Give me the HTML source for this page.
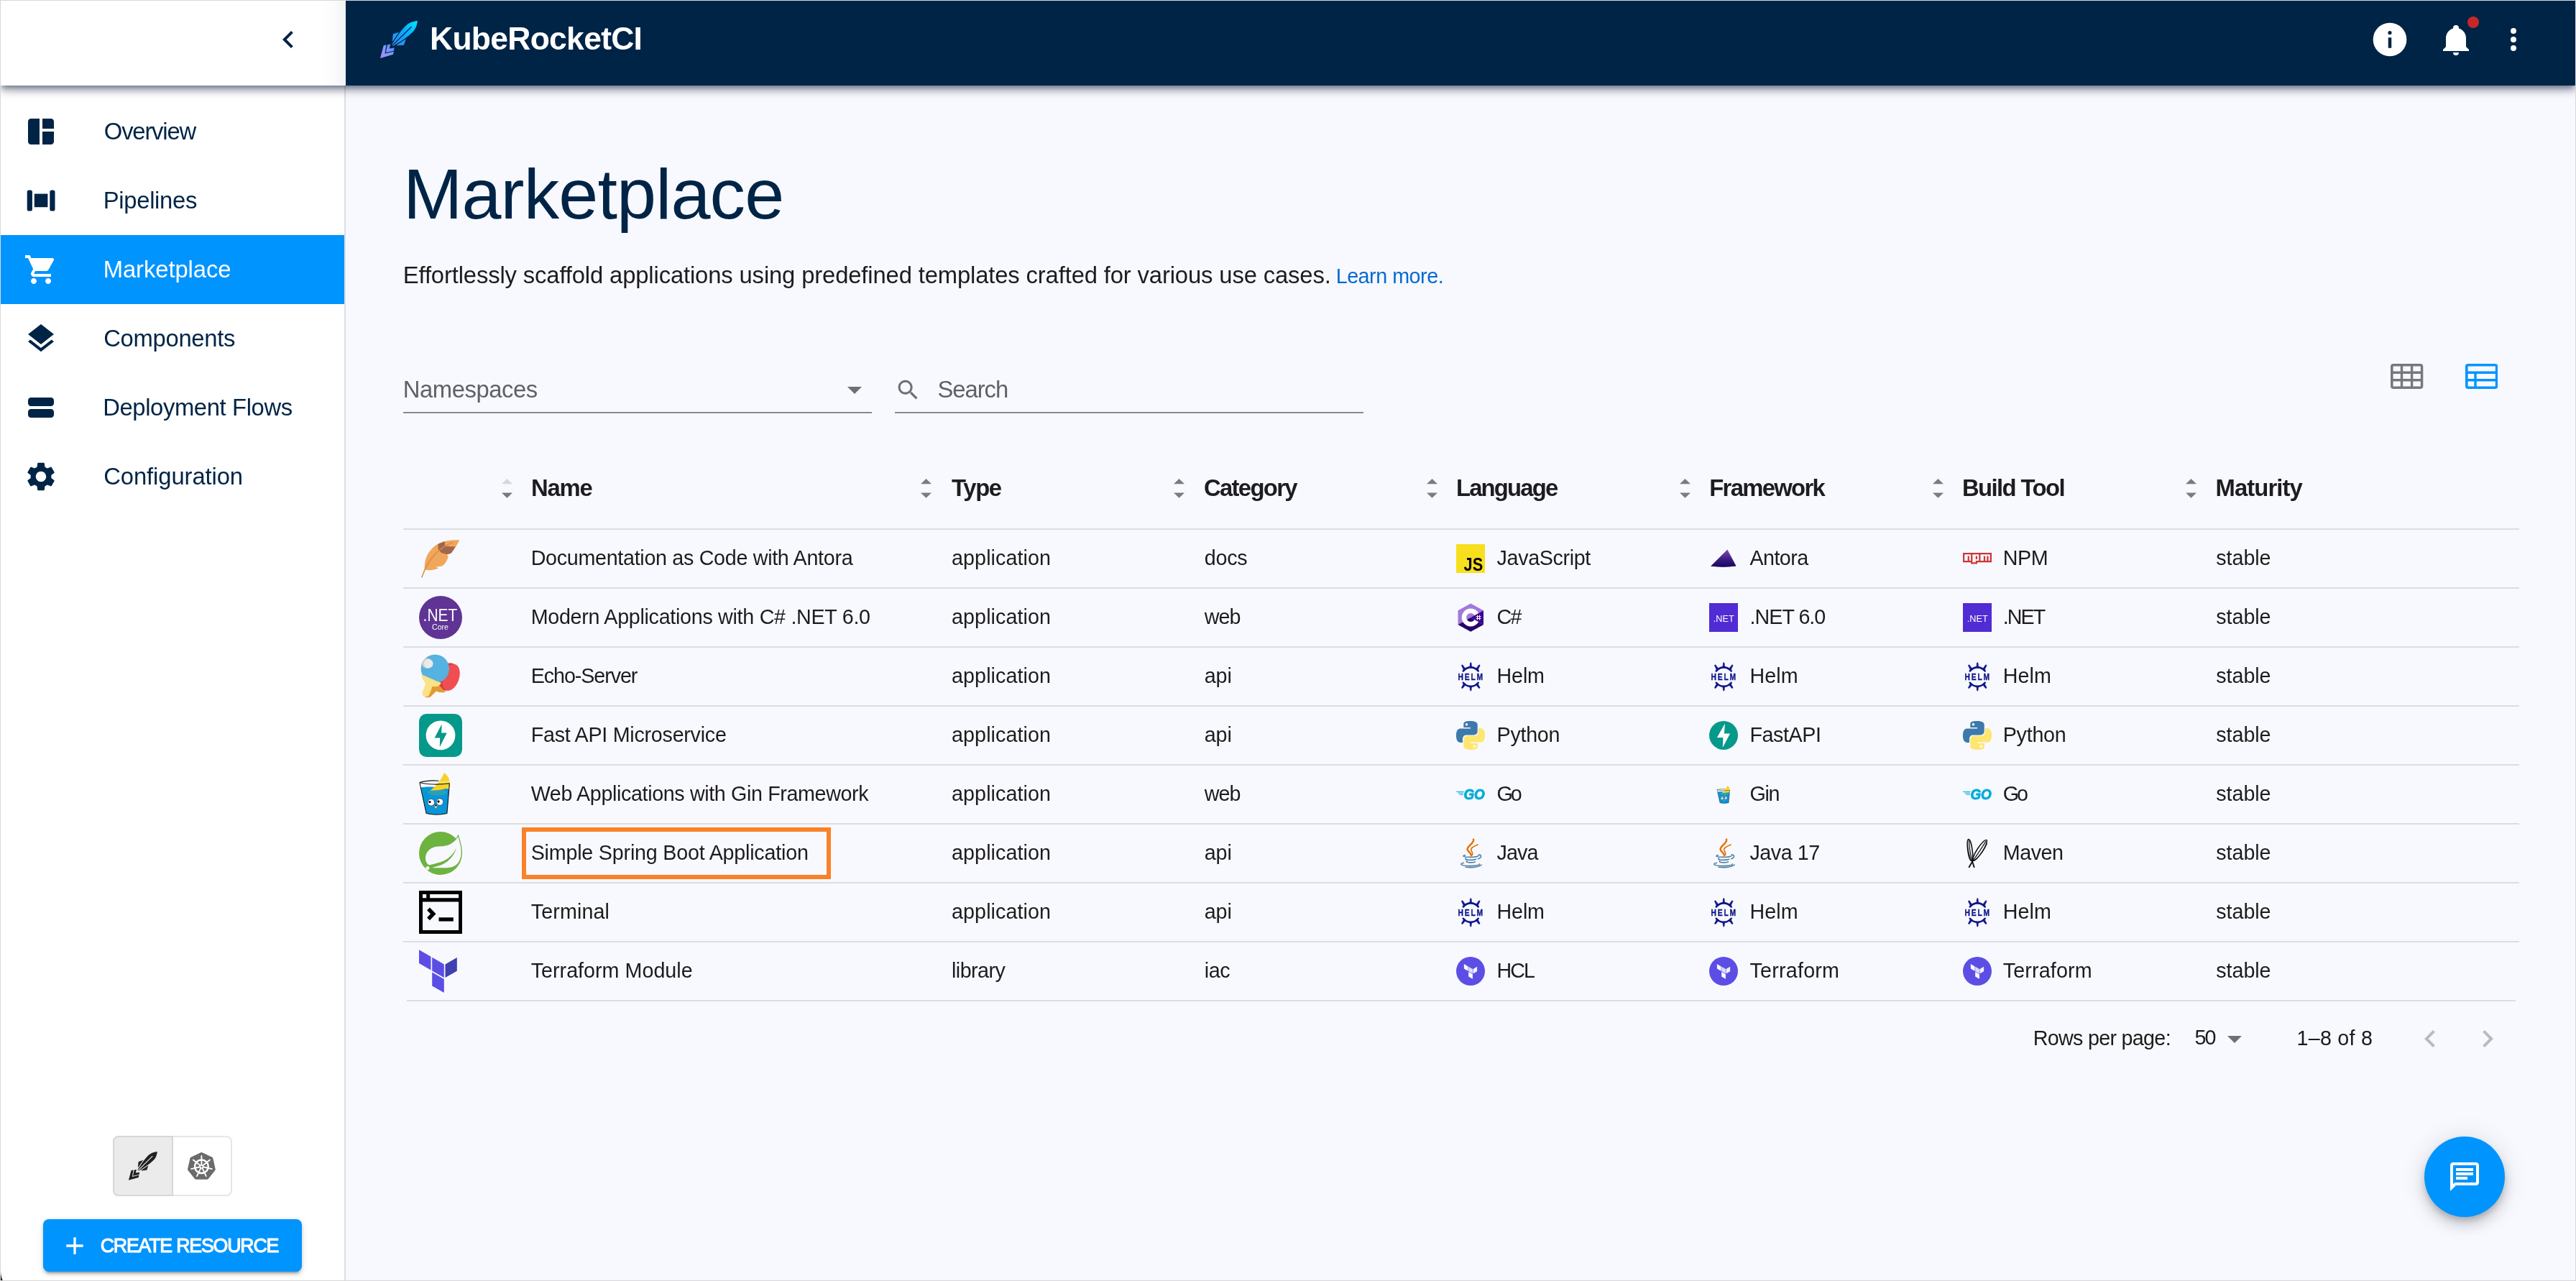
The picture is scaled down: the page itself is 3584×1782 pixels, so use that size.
<!DOCTYPE html>
<html lang="en"><head><meta charset="utf-8"><title>KubeRocketCI - Marketplace</title>
<style>
html,body{margin:0;padding:0}
body{width:3584px;height:1782px;overflow:hidden;background:#f8f9ff;font-family:"Liberation Sans",sans-serif}
#app{position:relative;width:3584px;height:1782px;overflow:hidden;background:#f8f9ff}
.a{position:absolute;display:block}
.t{position:absolute;white-space:nowrap}
#layer{position:absolute;left:0;top:0;width:3584px;height:1782px;will-change:transform}
svg text{font-family:"Liberation Sans",sans-serif}
</style></head>
<body><div id="app"><div id="layer">
<div class="a" style="left:1px;top:1px;width:478px;height:1780px;background:#fff"></div>
<div class="a" style="left:479px;top:119px;width:2px;height:1662px;background:#dedfe3"></div>
<svg class="a" style="left:33.00px;top:159.00px;" width="48" height="48" viewBox="0 0 24 24"><path fill="#002446" fill-rule="evenodd" d="M11 21H5c-1.1 0-2-.9-2-2V5c0-1.1.9-2 2-2h6v18zm2 0h6c1.1 0 2-.9 2-2v-7h-8v9zm8-11V5c0-1.1-.9-2-2-2h-6v7h8z"/></svg>
<div class="t" style="left:144.85px;top:164px;font-size:32.8px;line-height:37px;font-weight:400;color:#002446;letter-spacing:-1.202px;">Overview</div>
<svg class="a" style="left:33.00px;top:255.00px;" width="48" height="48" viewBox="0 0 48 48"><rect x="4.7" y="9.5" width="7.2" height="29" rx="2.6" fill="#002446"/><rect x="36.3" y="9.5" width="7.2" height="29" rx="2.6" fill="#002446"/><rect x="14.8" y="14.6" width="18.6" height="18.6" fill="#002446"/></svg>
<div class="t" style="left:143.71px;top:260px;font-size:32.8px;line-height:37px;font-weight:400;color:#002446;letter-spacing:-0.302px;">Pipelines</div>
<div class="a" style="left:1px;top:327px;width:478px;height:96px;background:#0094ff"></div>
<svg class="a" style="left:33.00px;top:351.00px;" width="48" height="48" viewBox="0 0 24 24"><path fill="#fff" fill-rule="evenodd" d="M7 18c-1.1 0-1.99.9-1.99 2S5.9 22 7 22s2-.9 2-2-.9-2-2-2zM1 2v2h2l3.6 7.59-1.35 2.45c-.16.28-.25.61-.25.96 0 1.1.9 2 2 2h12v-2H7.42c-.14 0-.25-.11-.25-.25l.03-.12.9-1.63h7.45c.75 0 1.41-.41 1.75-1.03l3.58-6.49c.08-.14.12-.31.12-.48 0-.55-.45-1-1-1H5.21l-.94-2H1zm16 16c-1.1 0-1.99.9-1.99 2s.89 2 1.99 2 2-.9 2-2-.9-2-2-2z"/></svg>
<div class="t" style="left:143.71px;top:356px;font-size:32.8px;line-height:37px;font-weight:400;color:#fff;letter-spacing:-0.089px;">Marketplace</div>
<svg class="a" style="left:33.00px;top:447.00px;" width="48" height="48" viewBox="0 0 24 24"><path fill="#002446" fill-rule="evenodd" d="M11.99 18.54l-7.37-5.73L3 14.07l9 7 9-7-1.63-1.27-7.38 5.74zM12 16l7.36-5.73L21 9l-9-7-9 7 1.63 1.27L12 16z"/></svg>
<div class="t" style="left:144.23px;top:452px;font-size:32.8px;line-height:37px;font-weight:400;color:#002446;letter-spacing:-0.313px;">Components</div>
<svg class="a" style="left:33.00px;top:543.00px;" width="48" height="48" viewBox="0 0 24 24"><path fill="#002446" fill-rule="evenodd" d="M3 17v-2c0-1.1.9-2 2-2h14c1.1 0 2 .9 2 2v2c0 1.1-.9 2-2 2H5c-1.1 0-2-.9-2-2zM3 7v2c0 1.1.9 2 2 2h14c1.1 0 2-.9 2-2V7c0-1.1-.9-2-2-2H5c-1.1 0-2 .9-2 2z"/></svg>
<div class="t" style="left:143.21px;top:548px;font-size:32.8px;line-height:37px;font-weight:400;color:#002446;letter-spacing:-0.393px;">Deployment Flows</div>
<svg class="a" style="left:33.00px;top:639.00px;" width="48" height="48" viewBox="0 0 24 24"><path fill="#002446" fill-rule="evenodd" d="M19.14 12.94c.04-.3.06-.61.06-.94 0-.32-.02-.64-.07-.94l2.03-1.58c.18-.14.23-.41.12-.61l-1.92-3.32c-.12-.22-.37-.29-.59-.22l-2.39.96c-.5-.38-1.03-.7-1.62-.94l-.36-2.54c-.04-.24-.24-.41-.48-.41h-3.84c-.24 0-.43.17-.47.41l-.36 2.54c-.59.24-1.13.57-1.62.94l-2.39-.96c-.22-.08-.47 0-.59.22L2.74 8.87c-.12.21-.08.47.12.61l2.03 1.58c-.05.3-.09.63-.09.94s.02.64.07.94l-2.03 1.58c-.18.14-.23.41-.12.61l1.92 3.32c.12.22.37.29.59.22l2.39-.96c.5.38 1.03.7 1.62.94l.36 2.54c.05.24.24.41.48.41h3.84c.24 0 .44-.17.47-.41l.36-2.54c.59-.24 1.13-.56 1.62-.94l2.39.96c.22.08.47 0 .59-.22l1.92-3.32c.12-.22.07-.47-.12-.61l-2.01-1.58zM12 15.6c-1.98 0-3.6-1.62-3.6-3.6s1.62-3.6 3.6-3.6 3.6 1.62 3.6 3.6-1.62 3.6-3.6 3.6z"/></svg>
<div class="t" style="left:144.23px;top:644px;font-size:32.8px;line-height:37px;font-weight:400;color:#002446;letter-spacing:-0.100px;">Configuration</div>
<svg class="a" style="left:377.00px;top:31.30px;" width="48" height="48" viewBox="0 0 24 24"><path fill="#002446" fill-rule="evenodd" d="M15.41 7.41L14 6l-6 6 6 6 1.41-1.41L10.83 12z"/></svg>
<div class="a" style="left:157px;top:1580px;width:166px;height:84px;border-radius:8px;box-sizing:border-box;border:2px solid #e6e6e9;background:#fff"></div>
<div class="a" style="left:157px;top:1580px;width:84px;height:84px;border-radius:8px 0 0 8px;box-sizing:border-box;border:2px solid #d6d6d9;background:#ebebeb"></div>
<svg class="a" style="left:172.08px;top:1595.08px;" width="61.53846153846154" height="53.84615384615385" viewBox="0 0 80 70"><g transform="translate(60.9,9) rotate(135.6)"><path d="M30,0 L30,6.8 L37.1,10.4 L44.2,4.4 L44.2,-4.4 L37.1,-10.4 L30,-6.8 Z" fill="#212121" stroke="#212121" stroke-width=".6" stroke-linejoin="round"/><path d="M0,0 C4.5,-3.6 9.5,-6.3 16,-6.5 C27,-6.8 38,-3.6 48.9,-1.3 L48.9,1.3 C38,3.6 27,6.8 16,6.5 C9.5,6.3 4.5,3.6 0,0 Z" fill="#212121" stroke="#ebebeb" stroke-width="2.6" paint-order="stroke"/><path d="M12.2,0 L49.5,0" stroke="#ebebeb" stroke-width="1.35" stroke-linecap="round"/></g><path fill="#212121" d="M13.7,43.2 L17.5,42.2 L15.5,54.5 L27.9,51.8 L27,55.8 L9,60.9 Z"/><path fill="#212121" d="M18.9,42.6 L23.2,41.3 L21.9,47.5 L28.7,46.4 L27.9,50.8 L16.9,53 Z"/></svg>
<svg class="a" style="left:250.00px;top:1592.00px;" width="62" height="62" viewBox="250 1592 62 62"><polygon points="280.40,1605.20 294.16,1611.83 297.56,1626.72 288.04,1638.66 272.76,1638.66 263.24,1626.72 266.64,1611.83" fill="#6b6b6b" stroke="#6b6b6b" stroke-width="4.4" stroke-linejoin="round"/><g stroke="#fff" stroke-width="1.9" stroke-linecap="round" fill="none"><line x1="280.4" y1="1622.8" x2="280.40" y2="1608.00"/><line x1="280.4" y1="1622.8" x2="291.97" y2="1613.57"/><line x1="280.4" y1="1622.8" x2="294.83" y2="1626.09"/><line x1="280.4" y1="1622.8" x2="286.82" y2="1636.13"/><line x1="280.4" y1="1622.8" x2="273.98" y2="1636.13"/><line x1="280.4" y1="1622.8" x2="265.97" y2="1626.09"/><line x1="280.4" y1="1622.8" x2="268.83" y2="1613.57"/><circle cx="280.4" cy="1622.8" r="9.3" stroke-width="2.5"/></g><circle cx="280.4" cy="1622.8" r="3" fill="#fff"/><circle cx="280.4" cy="1622.8" r="1.3" fill="#6b6b6b"/></svg>
<div class="a" style="left:60px;top:1696px;width:360px;height:73px;border-radius:8px;background:#0094ff;box-shadow:0 6px 2px -4px rgba(0,0,0,.2),0 4px 4px rgba(0,0,0,.14),0 2px 10px rgba(0,0,0,.12)"></div>
<svg class="a" style="left:84.00px;top:1713.00px;" width="40" height="40" viewBox="0 0 24 24"><path fill="#fff" fill-rule="evenodd" d="M19 13h-6v6h-2v-6H5v-2h6V5h2v6h6v2z"/></svg>
<div class="t" style="left:139.74px;top:1718px;font-size:26.75px;line-height:30px;font-weight:400;color:#fff;letter-spacing:-1.211px;-webkit-text-stroke:1.1px #fff;">CREATE RESOURCE</div>
<div class="a" style="left:1px;top:1px;width:3582px;height:118px;box-shadow:0 4px 8px -2px rgba(0,20,50,.46),0 8px 10px rgba(0,20,50,.22),0 2px 20px rgba(0,20,50,.16);z-index:5"></div>
<div class="a" style="left:1px;top:1px;width:480px;height:118px;background:linear-gradient(90deg,#fff 0,#fff 446px,#fbfbfd 466px,#f0f1f5 480px);z-index:6"></div>
<div class="a" style="left:481px;top:1px;width:3102px;height:118px;background:#002446;z-index:6"></div>
<svg class="a" style="left:377.00px;top:31.30px;z-index:7" width="48" height="48" viewBox="0 0 24 24"><path fill="#002446" fill-rule="evenodd" d="M15.41 7.41L14 6l-6 6 6 6 1.41-1.41L10.83 12z"/></svg>
<svg class="a" style="left:520.00px;top:20.00px;z-index:7" width="80" height="70" viewBox="0 0 80 70"><defs><linearGradient id="rk" gradientUnits="userSpaceOnUse" x1="60.9" y1="9" x2="9" y2="61"><stop offset="0" stop-color="#00e6ff"/><stop offset=".33" stop-color="#0aa8ff"/><stop offset=".6" stop-color="#2f90fb"/><stop offset=".8" stop-color="#8296ff"/><stop offset="1" stop-color="#aa8cf3"/></linearGradient><linearGradient id="rk2" gradientUnits="userSpaceOnUse" x1="0" y1="0" x2="73.5" y2="0"><stop offset="0" stop-color="#00e6ff"/><stop offset=".33" stop-color="#0aa8ff"/><stop offset=".6" stop-color="#2f90fb"/><stop offset=".8" stop-color="#8296ff"/><stop offset="1" stop-color="#aa8cf3"/></linearGradient></defs><g transform="translate(60.9,9) rotate(135.6)"><path d="M30,0 L30,6.8 L37.1,10.4 L44.2,4.4 L44.2,-4.4 L37.1,-10.4 L30,-6.8 Z" fill="url(#rk2)" stroke="url(#rk2)" stroke-width=".6" stroke-linejoin="round"/><path d="M0,0 C4.5,-3.6 9.5,-6.3 16,-6.5 C27,-6.8 38,-3.6 48.9,-1.3 L48.9,1.3 C38,3.6 27,6.8 16,6.5 C9.5,6.3 4.5,3.6 0,0 Z" fill="url(#rk2)" stroke="#002446" stroke-width="2.6" paint-order="stroke"/><path d="M12.2,0 L49.5,0" stroke="#002446" stroke-width="1.35" stroke-linecap="round"/></g><path fill="url(#rk)" d="M13.7,43.2 L17.5,42.2 L15.5,54.5 L27.9,51.8 L27,55.8 L9,60.9 Z"/><path fill="url(#rk)" d="M18.9,42.6 L23.2,41.3 L21.9,47.5 L28.7,46.4 L27.9,50.8 L16.9,53 Z"/></svg>
<div class="t" style="left:598.02px;top:29px;font-size:44.48px;line-height:49px;font-weight:700;color:#fff;letter-spacing:-0.725px;z-index:7;">KubeRocketCI</div>
<svg class="a" style="left:3297.00px;top:27.00px;z-index:7" width="56" height="56" viewBox="0 0 24 24"><path fill="#fff" fill-rule="evenodd" d="M12 2a10 10 0 1 0 0 20a10 10 0 1 0 0-20z M12 6.85a1.12 1.12 0 1 1 0 2.24a1.12 1.12 0 1 1 0-2.24z M11.03 10.8h1.94v6.2h-1.94z"/></svg>
<svg class="a" style="left:3393.00px;top:30.80px;z-index:7" width="48" height="48" viewBox="0 0 24 24"><path fill="#fff" fill-rule="evenodd" d="M21,19V20H3V19L5,17V11C5,7.9 7.03,5.17 10,4.29C10,4.19 10,4.1 10,4A2,2 0 0,1 12,2A2,2 0 0,1 14,4C14,4.1 14,4.19 14,4.29C16.97,5.17 19,7.9 19,11V17L21,19M14,21A2,2 0 0,1 12,23A2,2 0 0,1 10,21"/></svg>
<div class="a" style="left:3432.8px;top:22.8px;width:16.4px;height:16.4px;border-radius:50%;background:#c62828;z-index:8"></div>
<svg class="a" style="left:3473.00px;top:31.00px;z-index:7" width="48" height="48" viewBox="0 0 24 24"><path fill="#fff" fill-rule="evenodd" d="M12,16A2,2 0 0,1 14,18A2,2 0 0,1 12,20A2,2 0 0,1 10,18A2,2 0 0,1 12,16M12,10A2,2 0 0,1 14,12A2,2 0 0,1 12,14A2,2 0 0,1 10,12A2,2 0 0,1 12,10M12,4A2,2 0 0,1 14,6A2,2 0 0,1 12,8A2,2 0 0,1 10,6A2,2 0 0,1 12,4Z"/></svg>
<div class="t" style="left:560.89px;top:214px;font-size:98.91px;line-height:111px;font-weight:400;color:#002446;letter-spacing:-0.843px;">Marketplace</div>
<div class="t" style="left:560.81px;top:364px;font-size:32.8px;line-height:37px;font-weight:400;color:#1c1c1e;letter-spacing:-0.144px;">Effortlessly scaffold applications using predefined templates crafted for various use cases.</div>
<div class="t" style="left:1858.65px;top:368px;font-size:28.7px;line-height:32px;font-weight:400;color:#0569d3;letter-spacing:-0.470px;">Learn more.</div>
<div class="t" style="left:560.81px;top:523px;font-size:32.8px;line-height:37px;font-weight:400;color:#606166;letter-spacing:-0.448px;">Namespaces</div>
<svg class="a" style="left:1165.00px;top:518.40px;" width="48" height="48" viewBox="0 0 24 24"><path fill="#6f7074" fill-rule="evenodd" d="M7 10l5 5 5-5z"/></svg>
<div class="a" style="left:561px;top:573px;width:652px;height:2px;background:#898a8e"></div>
<svg class="a" style="left:1245.00px;top:524.40px;" width="37" height="37" viewBox="0 0 24 24"><path fill="#6f7074" fill-rule="evenodd" d="M15.5 14h-.79l-.28-.27C15.41 12.59 16 11.11 16 9.5 16 5.91 13.09 3 9.5 3S3 5.91 3 9.5 5.91 16 9.5 16c1.61 0 3.09-.59 4.23-1.57l.27.28v.79l5 4.99L20.49 19l-4.99-5zm-6 0C7.01 14 5 11.99 5 9.5S7.01 5 9.5 5 14 7.01 14 9.5 11.99 14 9.5 14z"/></svg>
<div class="t" style="left:1304.51px;top:523px;font-size:32.8px;line-height:37px;font-weight:400;color:#606166;letter-spacing:-1.060px;">Search</div>
<div class="a" style="left:1245px;top:573px;width:652px;height:2px;background:#898a8e"></div>
<svg class="a" style="left:3326.40px;top:505.80px;" width="45.3" height="35" viewBox="0 0 45.3 35"><path fill="#77787b" fill-rule="evenodd" d="M4,0 H41.3 A4,4 0 0 1 45.3,4 V31 A4,4 0 0 1 41.3,35 H4 A4,4 0 0 1 0,31 V4 A4,4 0 0 1 4,0 Z M3.6,3.4 V10.4 H13.8 V3.4 Z M17.2,3.4 V10.4 H27.9 V3.4 Z M31.25,3.4 V10.4 H41.8 V3.4 Z M3.6,13.9 V20.9 H13.8 V13.9 Z M17.2,13.9 V20.9 H27.9 V13.9 Z M31.25,13.9 V20.9 H41.8 V13.9 Z M3.6,24.6 V31.6 H13.8 V24.6 Z M17.2,24.6 V31.6 H27.9 V24.6 Z M31.25,24.6 V31.6 H41.8 V24.6 Z"/></svg>
<svg class="a" style="left:3430.20px;top:505.80px;" width="45.3" height="35" viewBox="0 0 45.3 35"><path fill="#0094ff" fill-rule="evenodd" d="M4,0 H41.3 A4,4 0 0 1 45.3,4 V31 A4,4 0 0 1 41.3,35 H4 A4,4 0 0 1 0,31 V4 A4,4 0 0 1 4,0 Z M3.6,3.4 V10.4 H41.8 V3.4 Z M3.6,13.9 V20.9 H12.3 V13.9 Z M15.7,13.9 V20.9 H41.8 V13.9 Z M3.6,24.6 V31.6 H12.3 V24.6 Z M15.7,24.6 V31.6 H41.8 V24.6 Z"/></svg>
<div class="a" style="left:561px;top:735px;width:2944px;height:2px;background:#dddde0"></div>
<div class="a" style="left:561px;top:817px;width:2944px;height:2px;background:#dddde0"></div>
<div class="a" style="left:561px;top:899px;width:2944px;height:2px;background:#dddde0"></div>
<div class="a" style="left:561px;top:981px;width:2944px;height:2px;background:#dddde0"></div>
<div class="a" style="left:561px;top:1063px;width:2944px;height:2px;background:#dddde0"></div>
<div class="a" style="left:561px;top:1145px;width:2944px;height:2px;background:#dddde0"></div>
<div class="a" style="left:561px;top:1227px;width:2944px;height:2px;background:#dddde0"></div>
<div class="a" style="left:561px;top:1309px;width:2944px;height:2px;background:#dddde0"></div>
<div class="a" style="left:566px;top:1391px;width:2934px;height:2px;background:#dddde0"></div>
<div class="t" style="left:738.91px;top:660px;font-size:32.8px;line-height:37px;font-weight:700;color:#1d1d1f;letter-spacing:-1.171px;">Name</div>
<svg class="a" style="left:697.50px;top:665.80px;" width="15" height="27" viewBox="0 0 15 27"><path d="M0,7.2 L7.5,0 L15,7.2 Z" fill="#d6d7db"/><path d="M0,19.4 L15,19.4 L7.5,26.8 Z" fill="#77787b"/></svg>
<div class="t" style="left:1324.03px;top:660px;font-size:32.8px;line-height:37px;font-weight:700;color:#1d1d1f;letter-spacing:-1.345px;">Type</div>
<svg class="a" style="left:1280.80px;top:665.80px;" width="15" height="27" viewBox="0 0 15 27"><path d="M0,7.2 L7.5,0 L15,7.2 Z" fill="#7b7c80"/><path d="M0,19.4 L15,19.4 L7.5,26.8 Z" fill="#7b7c80"/></svg>
<div class="t" style="left:1675.05px;top:660px;font-size:32.8px;line-height:37px;font-weight:700;color:#1d1d1f;letter-spacing:-1.679px;">Category</div>
<svg class="a" style="left:1632.80px;top:665.80px;" width="15" height="27" viewBox="0 0 15 27"><path d="M0,7.2 L7.5,0 L15,7.2 Z" fill="#7b7c80"/><path d="M0,19.4 L15,19.4 L7.5,26.8 Z" fill="#7b7c80"/></svg>
<div class="t" style="left:2025.91px;top:660px;font-size:32.8px;line-height:37px;font-weight:700;color:#1d1d1f;letter-spacing:-1.782px;">Language</div>
<svg class="a" style="left:1984.50px;top:665.80px;" width="15" height="27" viewBox="0 0 15 27"><path d="M0,7.2 L7.5,0 L15,7.2 Z" fill="#7b7c80"/><path d="M0,19.4 L15,19.4 L7.5,26.8 Z" fill="#7b7c80"/></svg>
<div class="t" style="left:2378.21px;top:660px;font-size:32.8px;line-height:37px;font-weight:700;color:#1d1d1f;letter-spacing:-1.680px;">Framework</div>
<svg class="a" style="left:2336.80px;top:665.80px;" width="15" height="27" viewBox="0 0 15 27"><path d="M0,7.2 L7.5,0 L15,7.2 Z" fill="#7b7c80"/><path d="M0,19.4 L15,19.4 L7.5,26.8 Z" fill="#7b7c80"/></svg>
<div class="t" style="left:2729.91px;top:660px;font-size:32.8px;line-height:37px;font-weight:700;color:#1d1d1f;letter-spacing:-1.584px;">Build Tool</div>
<svg class="a" style="left:2688.50px;top:665.80px;" width="15" height="27" viewBox="0 0 15 27"><path d="M0,7.2 L7.5,0 L15,7.2 Z" fill="#7b7c80"/><path d="M0,19.4 L15,19.4 L7.5,26.8 Z" fill="#7b7c80"/></svg>
<div class="t" style="left:3082.51px;top:660px;font-size:32.8px;line-height:37px;font-weight:700;color:#1d1d1f;letter-spacing:-0.899px;">Maturity</div>
<svg class="a" style="left:3041.10px;top:665.80px;" width="15" height="27" viewBox="0 0 15 27"><path d="M0,7.2 L7.5,0 L15,7.2 Z" fill="#7b7c80"/><path d="M0,19.4 L15,19.4 L7.5,26.8 Z" fill="#7b7c80"/></svg>
<svg class="a" style="left:583.00px;top:747.00px;overflow:visible" width="60" height="60" viewBox="0 0 60 60"><path d="M56.4,4.25 C50,4 45,4.3 40.75,4.9 C36,5.8 32,7 28.25,8.6 C24,10.8 21,13 18.25,16.1 C15.5,19 13,22 11.4,25.5 C9.8,28.8 8.8,32 8.25,35.5 C7.7,39 7.5,42 7.6,45.5 L12,46.1 C15,46.3 18,46.1 20.75,45.5 C23,45 25.5,44.3 27,43.6 L23.25,41.1 C26.5,41.3 29.5,41.2 32,40.5 C34,39.3 35.8,37.5 37,35.5 C38.6,33 39.9,30 40.75,27.4 L38.9,24.25 C41,24 43,23.4 44.5,22.4 C46.5,20.6 48.2,18.5 49.5,16.1 C52,12.3 54.5,8.3 56.4,4.25 Z" fill="#f0a75b"/><path d="M26.4,9.9 L35.75,6.1 L36,12.75 L50.8,13.6 L44.75,22.4 L38.9,24.2 L31,22 L26.75,17.4 Z" fill="#a0664f"/><path d="M3.9,56.1 C8,44 14,32 24,22 C31,15.5 38,11 47,7.4" stroke="#dc8b3c" stroke-width="1.5" fill="none" stroke-linecap="round"/></svg>
<div class="t" style="left:738.70px;top:760px;font-size:28.7px;line-height:32px;font-weight:400;color:#1c1c1e;letter-spacing:-0.305px;">Documentation as Code with Antora</div>
<div class="t" style="left:1324.00px;top:760px;font-size:28.7px;line-height:32px;font-weight:400;color:#1c1c1e;letter-spacing:0.089px;">application</div>
<div class="t" style="left:1675.70px;top:760px;font-size:28.7px;line-height:32px;font-weight:400;color:#1c1c1e;letter-spacing:-0.191px;">docs</div>
<svg class="a" style="left:2026.00px;top:757.00px;overflow:visible" width="40" height="40" viewBox="0 0 40 40"><rect width="40" height="40" fill="#f7df1e"/><text x="10.6" y="36.6" font-size="25.5" font-weight="700" fill="#000" textLength="26.6" lengthAdjust="spacingAndGlyphs">JS</text></svg>
<div class="t" style="left:2082.60px;top:760px;font-size:28.7px;line-height:32px;font-weight:400;color:#1c1c1e;letter-spacing:-0.370px;">JavaScript</div>
<svg class="a" style="left:2378.00px;top:757.00px;overflow:visible" width="40" height="40" viewBox="0 0 40 40"><defs><linearGradient id="an2" x1="0" y1="0" x2="0" y2="1"><stop offset="0" stop-color="#7d4bb0"/><stop offset=".55" stop-color="#3b1b84"/><stop offset="1" stop-color="#1a0759"/></linearGradient></defs><path d="M25.25,8 L37,30.2 Q20,32.6 2.75,30.4 Z" fill="url(#an2)" stroke="url(#an2)" stroke-width=".8" stroke-linejoin="round"/></svg>
<div class="t" style="left:2434.50px;top:760px;font-size:28.7px;line-height:32px;font-weight:400;color:#1c1c1e;letter-spacing:-0.566px;">Antora</div>
<svg class="a" style="left:2730.80px;top:757.00px;overflow:visible" width="40" height="40" viewBox="0 0 40 40"><g transform="translate(0,12) scale(2.2222)"><path fill="#cb3837" d="M0,0h18v6H9v1H5V6H0V0z M1,5h2V2h1v3h1V1H1V5z M6,1v5h2V5h2V1H6z M8,2h1v2H8V2z M11,1v4h2V2h1v3h1V2h1v3h1V1H11z"/></g></svg>
<div class="t" style="left:2786.70px;top:760px;font-size:28.7px;line-height:32px;font-weight:400;color:#1c1c1e;letter-spacing:-0.348px;">NPM</div>
<div class="t" style="left:3083.30px;top:760px;font-size:28.7px;line-height:32px;font-weight:400;color:#1c1c1e;letter-spacing:-0.057px;">stable</div>
<svg class="a" style="left:583.00px;top:829.00px;overflow:visible" width="60" height="60" viewBox="0 0 60 60"><circle cx="30" cy="30" r="30" fill="#5f3494"/><text x="5.6" y="34.8" font-size="24" fill="#fff" textLength="47.6" lengthAdjust="spacingAndGlyphs">.NET</text><text x="18" y="46.7" font-size="11.5" fill="#fff" textLength="23" lengthAdjust="spacingAndGlyphs">Core</text></svg>
<div class="t" style="left:738.70px;top:842px;font-size:28.7px;line-height:32px;font-weight:400;color:#1c1c1e;letter-spacing:-0.294px;">Modern Applications with C# .NET 6.0</div>
<div class="t" style="left:1324.00px;top:842px;font-size:28.7px;line-height:32px;font-weight:400;color:#1c1c1e;letter-spacing:0.089px;">application</div>
<div class="t" style="left:1675.70px;top:842px;font-size:28.7px;line-height:32px;font-weight:400;color:#1c1c1e;letter-spacing:-0.868px;">web</div>
<svg class="a" style="left:2026.00px;top:839.00px;overflow:visible" width="40" height="40" viewBox="0 0 40 40"><polygon points="2.5,10.2 20.2,0.4 38,10.2 2.5,29.9" fill="#a179dc"/><polygon points="2.5,29.9 20.2,20 38,29.9 20.2,39.75" fill="#280068"/><circle cx="20.2" cy="20" r="9.3" fill="none" stroke="#fff" stroke-width="6.4"/><polygon points="20.2,20 38,10.2 38,29.9" fill="#390091"/><g stroke="#fff" stroke-width="1.05"><path d="M29.6,16.6 V23.4 M32.6,16.6 V23.4 M27.6,18.7 H34.6 M27.6,21.4 H34.6"/></g></svg>
<div class="t" style="left:2082.60px;top:842px;font-size:28.7px;line-height:32px;font-weight:400;color:#1c1c1e;letter-spacing:-1.832px;">C#</div>
<svg class="a" style="left:2378.00px;top:839.00px;overflow:visible" width="40" height="40" viewBox="0 0 40 40"><rect width="40" height="40" fill="#512bd4"/><text x="5.8" y="25.8" font-size="13.6" fill="#fff" textLength="28.9" lengthAdjust="spacingAndGlyphs">.NET</text></svg>
<div class="t" style="left:2434.50px;top:842px;font-size:28.7px;line-height:32px;font-weight:400;color:#1c1c1e;letter-spacing:-0.981px;">.NET 6.0</div>
<svg class="a" style="left:2730.80px;top:839.00px;overflow:visible" width="40" height="40" viewBox="0 0 40 40"><rect width="40" height="40" fill="#512bd4"/><text x="5.8" y="25.8" font-size="13.6" fill="#fff" textLength="28.9" lengthAdjust="spacingAndGlyphs">.NET</text></svg>
<div class="t" style="left:2786.70px;top:842px;font-size:28.7px;line-height:32px;font-weight:400;color:#1c1c1e;letter-spacing:-1.934px;">.NET</div>
<div class="t" style="left:3083.30px;top:842px;font-size:28.7px;line-height:32px;font-weight:400;color:#1c1c1e;letter-spacing:-0.057px;">stable</div>
<svg class="a" style="left:583.00px;top:911.00px;overflow:visible" width="60" height="60" viewBox="0 0 60 60"><g><ellipse cx="40.5" cy="30.5" rx="14.5" ry="19.8" transform="rotate(18 40.5 30.5)" fill="#dd3d43"/><ellipse cx="44.6" cy="31.2" rx="11.2" ry="19" transform="rotate(18 44.6 31.2)" fill="#f04f51"/><path d="M18.2,44 L28.5,42.7 C32,47 35,50 37.5,51.5 C33,53 28,52.5 24,50.5 L16,58.2 C13,60 9,59.5 7.6,58 Z" fill="#e29b33"/><circle cx="22.3" cy="19.3" r="19.7" fill="#56b2e0"/><path d="M3.2,27 C11,30.5 22,35.5 30.8,39 C29.5,41.5 28.5,42.5 26.5,43.5 C23,44.5 20.5,44 18.4,44 C17,48.5 15.5,53 13.5,56.5 C11.5,59.5 6,58.5 4.6,55 C4,52 7,47 9,39.5 C6,36 4,31.5 3.2,27 Z" fill="#fbe187"/><path d="M5.5,8.5 A7.2,7.2 0 0 0 14,19 A9,9 0 0 1 5.5,8.5 Z" fill="#2e8fc6"/><circle cx="11.3" cy="12" r="7.2" fill="#d2d2d2"/><circle cx="13.3" cy="12.2" r="6.2" fill="#ebebeb"/></g></svg>
<div class="t" style="left:738.70px;top:924px;font-size:28.7px;line-height:32px;font-weight:400;color:#1c1c1e;letter-spacing:-1.076px;">Echo-Server</div>
<div class="t" style="left:1324.00px;top:924px;font-size:28.7px;line-height:32px;font-weight:400;color:#1c1c1e;letter-spacing:0.089px;">application</div>
<div class="t" style="left:1675.70px;top:924px;font-size:28.7px;line-height:32px;font-weight:400;color:#1c1c1e;letter-spacing:-0.031px;">api</div>
<svg class="a" style="left:2026.00px;top:921.00px;overflow:visible" width="40" height="40" viewBox="0 0 40 40"><g fill="none" stroke="#0f1689" stroke-width="2.6" stroke-linecap="round"><path d="M9.8,12.4 A13.4,13.4 0 0 1 30.7,12.4"/><path d="M9.8,28.8 A13.4,13.4 0 0 0 30.7,28.8"/></g><g fill="#0f1689" stroke="#0f1689" stroke-width=".5" stroke-linejoin="round"><path d="M18.75,7.6 L19.5,1 Q20.25,-0.1 21,1 L21.75,7.6 Z"/><path d="M18.75,33.6 L19.5,39.6 Q20.25,40.7 21,39.6 L21.75,33.6 Z"/><path d="M10.9,12.3 L7.4,4.8 Q7.6,3.5 9,3.9 L13.6,10.3 Z"/><path d="M29.6,12.3 L33.1,4.8 Q32.9,3.5 31.5,3.9 L26.9,10.3 Z"/><path d="M10.9,28.9 L7.4,35.6 Q7.6,36.9 9,36.5 L13.6,30.9 Z"/><path d="M29.6,28.9 L33.1,35.6 Q32.9,36.9 31.5,36.5 L26.9,30.9 Z"/></g><text transform="translate(2.55 24.5) scale(.84 1)" font-size="12.2" font-weight="700" fill="#0f1689" stroke="#0f1689" stroke-width=".4" letter-spacing="2.15">HELM</text></svg>
<div class="t" style="left:2082.60px;top:924px;font-size:28.7px;line-height:32px;font-weight:400;color:#1c1c1e;letter-spacing:-0.187px;">Helm</div>
<svg class="a" style="left:2378.00px;top:921.00px;overflow:visible" width="40" height="40" viewBox="0 0 40 40"><g fill="none" stroke="#0f1689" stroke-width="2.6" stroke-linecap="round"><path d="M9.8,12.4 A13.4,13.4 0 0 1 30.7,12.4"/><path d="M9.8,28.8 A13.4,13.4 0 0 0 30.7,28.8"/></g><g fill="#0f1689" stroke="#0f1689" stroke-width=".5" stroke-linejoin="round"><path d="M18.75,7.6 L19.5,1 Q20.25,-0.1 21,1 L21.75,7.6 Z"/><path d="M18.75,33.6 L19.5,39.6 Q20.25,40.7 21,39.6 L21.75,33.6 Z"/><path d="M10.9,12.3 L7.4,4.8 Q7.6,3.5 9,3.9 L13.6,10.3 Z"/><path d="M29.6,12.3 L33.1,4.8 Q32.9,3.5 31.5,3.9 L26.9,10.3 Z"/><path d="M10.9,28.9 L7.4,35.6 Q7.6,36.9 9,36.5 L13.6,30.9 Z"/><path d="M29.6,28.9 L33.1,35.6 Q32.9,36.9 31.5,36.5 L26.9,30.9 Z"/></g><text transform="translate(2.55 24.5) scale(.84 1)" font-size="12.2" font-weight="700" fill="#0f1689" stroke="#0f1689" stroke-width=".4" letter-spacing="2.15">HELM</text></svg>
<div class="t" style="left:2434.50px;top:924px;font-size:28.7px;line-height:32px;font-weight:400;color:#1c1c1e;letter-spacing:0.080px;">Helm</div>
<svg class="a" style="left:2730.80px;top:921.00px;overflow:visible" width="40" height="40" viewBox="0 0 40 40"><g fill="none" stroke="#0f1689" stroke-width="2.6" stroke-linecap="round"><path d="M9.8,12.4 A13.4,13.4 0 0 1 30.7,12.4"/><path d="M9.8,28.8 A13.4,13.4 0 0 0 30.7,28.8"/></g><g fill="#0f1689" stroke="#0f1689" stroke-width=".5" stroke-linejoin="round"><path d="M18.75,7.6 L19.5,1 Q20.25,-0.1 21,1 L21.75,7.6 Z"/><path d="M18.75,33.6 L19.5,39.6 Q20.25,40.7 21,39.6 L21.75,33.6 Z"/><path d="M10.9,12.3 L7.4,4.8 Q7.6,3.5 9,3.9 L13.6,10.3 Z"/><path d="M29.6,12.3 L33.1,4.8 Q32.9,3.5 31.5,3.9 L26.9,10.3 Z"/><path d="M10.9,28.9 L7.4,35.6 Q7.6,36.9 9,36.5 L13.6,30.9 Z"/><path d="M29.6,28.9 L33.1,35.6 Q32.9,36.9 31.5,36.5 L26.9,30.9 Z"/></g><text transform="translate(2.55 24.5) scale(.84 1)" font-size="12.2" font-weight="700" fill="#0f1689" stroke="#0f1689" stroke-width=".4" letter-spacing="2.15">HELM</text></svg>
<div class="t" style="left:2786.70px;top:924px;font-size:28.7px;line-height:32px;font-weight:400;color:#1c1c1e;letter-spacing:0.080px;">Helm</div>
<div class="t" style="left:3083.30px;top:924px;font-size:28.7px;line-height:32px;font-weight:400;color:#1c1c1e;letter-spacing:-0.057px;">stable</div>
<svg class="a" style="left:583.00px;top:993.00px;overflow:visible" width="60" height="60" viewBox="0 0 60 60"><rect width="60" height="60" rx="10.5" fill="#05998b"/><circle cx="30" cy="29.9" r="20.4" fill="#fff"/><path d="M31.6,14.4 L21.6,33.4 L29.2,33.4 L28.75,46.25 L38.75,26.6 L31.2,26.6 Z" fill="#05998b"/></svg>
<div class="t" style="left:738.70px;top:1006px;font-size:28.7px;line-height:32px;font-weight:400;color:#1c1c1e;letter-spacing:-0.261px;">Fast API Microservice</div>
<div class="t" style="left:1324.00px;top:1006px;font-size:28.7px;line-height:32px;font-weight:400;color:#1c1c1e;letter-spacing:0.089px;">application</div>
<div class="t" style="left:1675.70px;top:1006px;font-size:28.7px;line-height:32px;font-weight:400;color:#1c1c1e;letter-spacing:-0.031px;">api</div>
<svg class="a" style="left:2026.00px;top:1003.00px;overflow:visible" width="40" height="40" viewBox="0 0 40 40"><g transform="scale(1.6667)"><path d="M14.25.18l.9.2.73.26.59.3.45.32.34.34.25.34.16.33.1.3.04.26.02.2-.01.13V8.5l-.05.63-.13.55-.21.46-.26.38-.3.31-.33.25-.35.19-.35.14-.33.1-.3.07-.26.04-.21.02H8.77l-.69.05-.59.14-.5.22-.41.27-.33.32-.27.35-.2.36-.15.37-.1.35-.07.32-.04.27-.02.21v3.06H3.17l-.21-.03-.28-.07-.32-.12-.35-.18-.36-.26-.36-.36-.35-.46-.32-.59-.28-.73-.21-.88-.14-1.05-.05-1.23.06-1.22.16-1.04.24-.87.32-.71.36-.57.4-.44.42-.33.42-.24.4-.16.36-.1.32-.05.24-.01h.16l.06.01h8.16v-.83H6.18l-.01-2.75-.02-.37.05-.34.11-.31.17-.28.25-.26.31-.23.38-.2.44-.18.51-.15.58-.12.64-.1.71-.06.77-.04.84-.02 1.27.05z" fill="#3d7aab"/><path d="M7.95 2.16l-.23.33-.08.41.08.41.23.34.33.22.41.09.41-.09.33-.22.23-.34.08-.41-.08-.41-.23-.33-.33-.22-.41-.09-.41.09z" fill="#fff"/><path d="M21.04 6.11l.28.06.32.12.35.18.36.27.36.35.35.47.32.59.28.73.21.88.14 1.04.05 1.23-.06 1.23-.16 1.04-.24.86-.32.71-.36.57-.4.45-.42.33-.42.24-.4.16-.36.09-.32.05-.24.02-.16-.01h-8.22v.82h5.84l.01 2.76.02.36-.05.34-.11.31-.17.29-.25.25-.31.24-.38.2-.44.17-.51.15-.58.13-.64.09-.71.07-.77.04-.84.01-1.27-.04-1.07-.14-.9-.2-.73-.25-.59-.3-.45-.33-.34-.34-.25-.34-.16-.33-.1-.3-.04-.25-.02-.2.01-.13v-5.34l.05-.64.13-.54.21-.46.26-.38.3-.32.33-.24.35-.2.35-.14.33-.1.3-.06.26-.04.21-.02.13-.01h5.84l.69-.05.59-.14.5-.21.41-.28.33-.32.27-.35.2-.36.15-.36.1-.35.07-.32.04-.28.02-.21V6.07h2.09l.14.01z" fill="#ffe66f"/><path d="M14.57 20.36l-.23.33-.08.41.08.41.23.33.33.23.41.08.41-.08.33-.23.23-.33.08-.41-.08-.41-.23-.33-.33-.23-.41-.08-.41.08z" fill="#fff"/></g></svg>
<div class="t" style="left:2082.60px;top:1006px;font-size:28.7px;line-height:32px;font-weight:400;color:#1c1c1e;letter-spacing:-0.290px;">Python</div>
<svg class="a" style="left:2378.00px;top:1003.00px;overflow:visible" width="40" height="40" viewBox="0 0 40 40"><circle cx="20" cy="19.9" r="20" fill="#05998b"/><path d="M21.9,3.6 L10.9,23.1 L19.4,23.1 L18.75,37.1 L29,17.5 L20.9,17.5 Z" fill="#fff"/></svg>
<div class="t" style="left:2434.50px;top:1006px;font-size:28.7px;line-height:32px;font-weight:400;color:#1c1c1e;letter-spacing:-0.447px;">FastAPI</div>
<svg class="a" style="left:2730.80px;top:1003.00px;overflow:visible" width="40" height="40" viewBox="0 0 40 40"><g transform="scale(1.6667)"><path d="M14.25.18l.9.2.73.26.59.3.45.32.34.34.25.34.16.33.1.3.04.26.02.2-.01.13V8.5l-.05.63-.13.55-.21.46-.26.38-.3.31-.33.25-.35.19-.35.14-.33.1-.3.07-.26.04-.21.02H8.77l-.69.05-.59.14-.5.22-.41.27-.33.32-.27.35-.2.36-.15.37-.1.35-.07.32-.04.27-.02.21v3.06H3.17l-.21-.03-.28-.07-.32-.12-.35-.18-.36-.26-.36-.36-.35-.46-.32-.59-.28-.73-.21-.88-.14-1.05-.05-1.23.06-1.22.16-1.04.24-.87.32-.71.36-.57.4-.44.42-.33.42-.24.4-.16.36-.1.32-.05.24-.01h.16l.06.01h8.16v-.83H6.18l-.01-2.75-.02-.37.05-.34.11-.31.17-.28.25-.26.31-.23.38-.2.44-.18.51-.15.58-.12.64-.1.71-.06.77-.04.84-.02 1.27.05z" fill="#3d7aab"/><path d="M7.95 2.16l-.23.33-.08.41.08.41.23.34.33.22.41.09.41-.09.33-.22.23-.34.08-.41-.08-.41-.23-.33-.33-.22-.41-.09-.41.09z" fill="#fff"/><path d="M21.04 6.11l.28.06.32.12.35.18.36.27.36.35.35.47.32.59.28.73.21.88.14 1.04.05 1.23-.06 1.23-.16 1.04-.24.86-.32.71-.36.57-.4.45-.42.33-.42.24-.4.16-.36.09-.32.05-.24.02-.16-.01h-8.22v.82h5.84l.01 2.76.02.36-.05.34-.11.31-.17.29-.25.25-.31.24-.38.2-.44.17-.51.15-.58.13-.64.09-.71.07-.77.04-.84.01-1.27-.04-1.07-.14-.9-.2-.73-.25-.59-.3-.45-.33-.34-.34-.25-.34-.16-.33-.1-.3-.04-.25-.02-.2.01-.13v-5.34l.05-.64.13-.54.21-.46.26-.38.3-.32.33-.24.35-.2.35-.14.33-.1.3-.06.26-.04.21-.02.13-.01h5.84l.69-.05.59-.14.5-.21.41-.28.33-.32.27-.35.2-.36.15-.36.1-.35.07-.32.04-.28.02-.21V6.07h2.09l.14.01z" fill="#ffe66f"/><path d="M14.57 20.36l-.23.33-.08.41.08.41.23.33.33.23.41.08.41-.08.33-.23.23-.33.08-.41-.08-.41-.23-.33-.33-.23-.41-.08-.41.08z" fill="#fff"/></g></svg>
<div class="t" style="left:2786.70px;top:1006px;font-size:28.7px;line-height:32px;font-weight:400;color:#1c1c1e;letter-spacing:-0.250px;">Python</div>
<div class="t" style="left:3083.30px;top:1006px;font-size:28.7px;line-height:32px;font-weight:400;color:#1c1c1e;letter-spacing:-0.057px;">stable</div>
<svg class="a" style="left:583.00px;top:1075.00px;overflow:visible" width="60" height="60" viewBox="0 0 60 60"><g><path d="M0.8,13.5 L42.4,14.8 L38.9,56.5 C30,58.6 19,58.6 10.1,56.5 Z" fill="#fff"/><path d="M2.4,20.6 C12,18.5 30,19.5 42,22.5 L38.9,56.5 C30,58.6 19,58.6 10.1,56.5 Z" fill="#0796d8"/><ellipse cx="25.5" cy="27.3" rx="13.5" ry="4.4" fill="#2d9fb4"/><path d="M35.1,0 C39,3 41.5,6.5 42.3,10.5 C42.8,14 42.9,17 42.6,20.5 C34,23.5 24,25 15.75,24.4 C21,20.5 25,16.5 28.25,11.9 C31,8 33.5,4 35.1,0 Z" fill="#f4d228"/><path d="M28.25,11.9 L42.3,11.2 L42.6,14.8 L27,14.2 Z" fill="#fbe77a" opacity=".7"/><path d="M0.8,13.5 C8,11.2 20,10.6 27.5,11.2 M0.8,13.5 C10,16.8 30,16.6 42.4,14.8 M0.8,13.5 L10.1,56.5 C19,58.6 30,58.6 38.9,56.5 L42.4,14.8" fill="none" stroke="#111" stroke-width="1.1" stroke-linejoin="round"/><circle cx="16.75" cy="41.25" r="4.7" fill="#fff" stroke="#111" stroke-width=".5"/><circle cx="28.9" cy="40.6" r="4.7" fill="#fff" stroke="#111" stroke-width=".5"/><circle cx="15" cy="40.6" r="1.7" fill="#111"/><circle cx="27" cy="40" r="1.7" fill="#111"/><ellipse cx="23.25" cy="46" rx="2.6" ry="1.6" fill="#c9a27e"/><ellipse cx="23.25" cy="45.2" rx="1.5" ry=".9" fill="#222"/><rect x="22.1" y="47" width="2.4" height="2.3" rx=".6" fill="#fff" stroke="#333" stroke-width=".3"/></g></svg>
<div class="t" style="left:738.70px;top:1088px;font-size:28.7px;line-height:32px;font-weight:400;color:#1c1c1e;letter-spacing:-0.371px;">Web Applications with Gin Framework</div>
<div class="t" style="left:1324.00px;top:1088px;font-size:28.7px;line-height:32px;font-weight:400;color:#1c1c1e;letter-spacing:0.089px;">application</div>
<div class="t" style="left:1675.70px;top:1088px;font-size:28.7px;line-height:32px;font-weight:400;color:#1c1c1e;letter-spacing:-0.868px;">web</div>
<svg class="a" style="left:2026.00px;top:1085.00px;overflow:visible" width="40" height="40" viewBox="0 0 40 40"><g stroke="#00acd7" stroke-width="1" stroke-linecap="round"><path d="M0.4,16.3 H10.2 M2.9,18.2 H9.6 M4.8,20.3 H9.6"/></g><text x="10.4" y="27.4" font-size="21" font-weight="700" font-style="italic" fill="#00acd7" stroke="#00acd7" stroke-width=".9" textLength="29.4" lengthAdjust="spacingAndGlyphs">GO</text></svg>
<div class="t" style="left:2082.60px;top:1088px;font-size:28.7px;line-height:32px;font-weight:400;color:#1c1c1e;letter-spacing:-3.276px;">Go</div>
<svg class="a" style="left:2378.00px;top:1085.00px;overflow:visible" width="40" height="40" viewBox="0 0 40 40"><g transform="translate(10.7,8) scale(0.42)"><g><path d="M0.8,13.5 L42.4,14.8 L38.9,56.5 C30,58.6 19,58.6 10.1,56.5 Z" fill="#fff"/><path d="M2.4,20.6 C12,18.5 30,19.5 42,22.5 L38.9,56.5 C30,58.6 19,58.6 10.1,56.5 Z" fill="#0796d8"/><ellipse cx="25.5" cy="27.3" rx="13.5" ry="4.4" fill="#2d9fb4"/><path d="M35.1,0 C39,3 41.5,6.5 42.3,10.5 C42.8,14 42.9,17 42.6,20.5 C34,23.5 24,25 15.75,24.4 C21,20.5 25,16.5 28.25,11.9 C31,8 33.5,4 35.1,0 Z" fill="#f4d228"/><path d="M28.25,11.9 L42.3,11.2 L42.6,14.8 L27,14.2 Z" fill="#fbe77a" opacity=".7"/><path d="M0.8,13.5 C8,11.2 20,10.6 27.5,11.2 M0.8,13.5 C10,16.8 30,16.6 42.4,14.8 M0.8,13.5 L10.1,56.5 C19,58.6 30,58.6 38.9,56.5 L42.4,14.8" fill="none" stroke="#111" stroke-width="1.1" stroke-linejoin="round"/><circle cx="16.75" cy="41.25" r="4.7" fill="#fff" stroke="#111" stroke-width=".5"/><circle cx="28.9" cy="40.6" r="4.7" fill="#fff" stroke="#111" stroke-width=".5"/><circle cx="15" cy="40.6" r="1.7" fill="#111"/><circle cx="27" cy="40" r="1.7" fill="#111"/><ellipse cx="23.25" cy="46" rx="2.6" ry="1.6" fill="#c9a27e"/><ellipse cx="23.25" cy="45.2" rx="1.5" ry=".9" fill="#222"/><rect x="22.1" y="47" width="2.4" height="2.3" rx=".6" fill="#fff" stroke="#333" stroke-width=".3"/></g></g></svg>
<div class="t" style="left:2434.50px;top:1088px;font-size:28.7px;line-height:32px;font-weight:400;color:#1c1c1e;letter-spacing:-1.396px;">Gin</div>
<svg class="a" style="left:2730.80px;top:1085.00px;overflow:visible" width="40" height="40" viewBox="0 0 40 40"><g stroke="#00acd7" stroke-width="1" stroke-linecap="round"><path d="M0.4,16.3 H10.2 M2.9,18.2 H9.6 M4.8,20.3 H9.6"/></g><text x="10.4" y="27.4" font-size="21" font-weight="700" font-style="italic" fill="#00acd7" stroke="#00acd7" stroke-width=".9" textLength="29.4" lengthAdjust="spacingAndGlyphs">GO</text></svg>
<div class="t" style="left:2786.70px;top:1088px;font-size:28.7px;line-height:32px;font-weight:400;color:#1c1c1e;letter-spacing:-2.976px;">Go</div>
<div class="t" style="left:3083.30px;top:1088px;font-size:28.7px;line-height:32px;font-weight:400;color:#1c1c1e;letter-spacing:-0.057px;">stable</div>
<svg class="a" style="left:583.00px;top:1157.00px;overflow:visible" width="60" height="60" viewBox="0 0 60 60"><g transform="scale(2.5)"><path d="M21.8537 1.4158a10.4504 10.4504 0 0 1-1.284 2.2471A11.9666 11.9666 0 1 0 3.8518 20.7757l.4445.3951a11.9543 11.9543 0 0 0 19.6316-8.2971c.3457-3.0126-.568-6.8649-2.0743-11.458zM5.5805 20.8745a1.0174 1.0174 0 1 1-.1482-1.4323 1.0396 1.0396 0 0 1 .1482 1.4323zm16.1991-3.5806c-2.9385 3.9263-9.2601 2.5928-13.2852 2.7904 0 0-.7161.0494-1.4323.1481 0 0 .2717-.1234.6174-.2469 2.8398-.9877 4.1733-1.1853 5.9018-2.0743 3.2349-1.6545 6.4698-5.2844 7.1118-9.0379-1.2347 3.6053-4.9881 6.7167-8.3959 7.9761-2.3459.8643-6.5685 1.7039-6.5685 1.7039l-.1729-.0988c-2.8645-1.4076-2.9632-7.6304 2.2718-9.6306 2.2966-.889 4.4696-.395 6.9637-.9877 2.6422-.6174 5.7043-2.5929 6.939-5.1857 1.3828 4.1733 3.062 10.643.0493 14.6434z" fill="#6db33f"/></g></svg>
<div class="t" style="left:738.70px;top:1170px;font-size:28.7px;line-height:32px;font-weight:400;color:#1c1c1e;letter-spacing:-0.211px;">Simple Spring Boot Application</div>
<div class="t" style="left:1324.00px;top:1170px;font-size:28.7px;line-height:32px;font-weight:400;color:#1c1c1e;letter-spacing:0.089px;">application</div>
<div class="t" style="left:1675.70px;top:1170px;font-size:28.7px;line-height:32px;font-weight:400;color:#1c1c1e;letter-spacing:-0.031px;">api</div>
<svg class="a" style="left:2026.00px;top:1167.00px;overflow:visible" width="40" height="40" viewBox="0 0 40 40"><g fill="none" stroke="#e76f00" stroke-linecap="round"><path d="M24,0.6 C25.5,6 15,10 15.6,14.6 C16,17.5 20.5,19.5 21.2,23" stroke-width="2.5"/><path d="M30.2,8 C24,10.5 20,12.5 20.8,15.5 C21.3,17.5 23.5,19 22.6,22" stroke-width="1.6"/></g><g fill="none" stroke="#5382a1" stroke-linecap="round" stroke-width="1.6"><path d="M12.5,22.6 C8,23.6 9,25.3 20,25.4 C26,25.3 30,24.6 31,23.6"/><path d="M31.2,22.3 C35.5,21.3 36,26.3 30.6,27.8"/><path d="M13.6,27 C11.5,28.2 14,29.4 20,29.4 C23,29.4 26,29 27.6,28.3"/><path d="M14.8,30.8 C13.3,31.9 15.5,32.9 20,32.9 C22.5,32.9 25,32.5 26.4,31.9"/><path d="M10.5,33.2 C4,34.6 6,37.3 19,37.6 C28,37.6 33,36.4 32.4,34.9"/><path d="M13,39.2 C20,40.2 31,39.7 35.2,36"/></g></svg>
<div class="t" style="left:2082.60px;top:1170px;font-size:28.7px;line-height:32px;font-weight:400;color:#1c1c1e;letter-spacing:-0.936px;">Java</div>
<svg class="a" style="left:2378.00px;top:1167.00px;overflow:visible" width="40" height="40" viewBox="0 0 40 40"><g fill="none" stroke="#e76f00" stroke-linecap="round"><path d="M24,0.6 C25.5,6 15,10 15.6,14.6 C16,17.5 20.5,19.5 21.2,23" stroke-width="2.5"/><path d="M30.2,8 C24,10.5 20,12.5 20.8,15.5 C21.3,17.5 23.5,19 22.6,22" stroke-width="1.6"/></g><g fill="none" stroke="#5382a1" stroke-linecap="round" stroke-width="1.6"><path d="M12.5,22.6 C8,23.6 9,25.3 20,25.4 C26,25.3 30,24.6 31,23.6"/><path d="M31.2,22.3 C35.5,21.3 36,26.3 30.6,27.8"/><path d="M13.6,27 C11.5,28.2 14,29.4 20,29.4 C23,29.4 26,29 27.6,28.3"/><path d="M14.8,30.8 C13.3,31.9 15.5,32.9 20,32.9 C22.5,32.9 25,32.5 26.4,31.9"/><path d="M10.5,33.2 C4,34.6 6,37.3 19,37.6 C28,37.6 33,36.4 32.4,34.9"/><path d="M13,39.2 C20,40.2 31,39.7 35.2,36"/></g></svg>
<div class="t" style="left:2434.50px;top:1170px;font-size:28.7px;line-height:32px;font-weight:400;color:#1c1c1e;letter-spacing:-0.473px;">Java 17</div>
<svg class="a" style="left:2730.80px;top:1167.00px;overflow:visible" width="40" height="40" viewBox="0 0 40 40"><g fill="none" stroke="#111" stroke-width="1.5" stroke-linecap="round"><ellipse cx="9.9" cy="15.5" rx="3.2" ry="15.2" transform="rotate(-8 9.9 15.5)"/><path d="M8.3,2.5 C9,12 10.5,22 12.8,30" stroke-width="1.2"/><path d="M6.4,5 C6.6,14 8.6,23 11.6,29.5" stroke-width=".9"/><ellipse cx="23.6" cy="15.8" rx="3.8" ry="17" transform="rotate(33 23.6 15.8)"/><path d="M32,3.4 C27,11 20,22 14.6,29.6" stroke-width="1.2"/><path d="M33.6,6.5 C30,15 24,24 17,29" stroke-width=".9"/><path d="M12.4,29 L15.6,39.2 M14.6,29 L8.6,39.2" stroke-width="1.9"/></g></svg>
<div class="t" style="left:2786.70px;top:1170px;font-size:28.7px;line-height:32px;font-weight:400;color:#1c1c1e;letter-spacing:-0.436px;">Maven</div>
<div class="t" style="left:3083.30px;top:1170px;font-size:28.7px;line-height:32px;font-weight:400;color:#1c1c1e;letter-spacing:-0.057px;">stable</div>
<svg class="a" style="left:583.00px;top:1239.00px;overflow:visible" width="60" height="60" viewBox="0 0 60 60"><path fill="#000" fill-rule="evenodd" d="M0,0 H60 V60 H0 Z M5,5 V10.2 H10.2 V5 Z M15.1,5 V10.2 H55.1 V5 Z M5,15.4 V55 H55.1 V15.4 Z"/><path d="M13,25.3 L19.8,32.3 L13,39.4" fill="none" stroke="#000" stroke-width="5.4"/><rect x="27.5" y="37.3" width="20.3" height="5.3" fill="#000"/></svg>
<div class="t" style="left:738.70px;top:1252px;font-size:28.7px;line-height:32px;font-weight:400;color:#1c1c1e;letter-spacing:0.116px;">Terminal</div>
<div class="t" style="left:1324.00px;top:1252px;font-size:28.7px;line-height:32px;font-weight:400;color:#1c1c1e;letter-spacing:0.089px;">application</div>
<div class="t" style="left:1675.70px;top:1252px;font-size:28.7px;line-height:32px;font-weight:400;color:#1c1c1e;letter-spacing:-0.031px;">api</div>
<svg class="a" style="left:2026.00px;top:1249.00px;overflow:visible" width="40" height="40" viewBox="0 0 40 40"><g fill="none" stroke="#0f1689" stroke-width="2.6" stroke-linecap="round"><path d="M9.8,12.4 A13.4,13.4 0 0 1 30.7,12.4"/><path d="M9.8,28.8 A13.4,13.4 0 0 0 30.7,28.8"/></g><g fill="#0f1689" stroke="#0f1689" stroke-width=".5" stroke-linejoin="round"><path d="M18.75,7.6 L19.5,1 Q20.25,-0.1 21,1 L21.75,7.6 Z"/><path d="M18.75,33.6 L19.5,39.6 Q20.25,40.7 21,39.6 L21.75,33.6 Z"/><path d="M10.9,12.3 L7.4,4.8 Q7.6,3.5 9,3.9 L13.6,10.3 Z"/><path d="M29.6,12.3 L33.1,4.8 Q32.9,3.5 31.5,3.9 L26.9,10.3 Z"/><path d="M10.9,28.9 L7.4,35.6 Q7.6,36.9 9,36.5 L13.6,30.9 Z"/><path d="M29.6,28.9 L33.1,35.6 Q32.9,36.9 31.5,36.5 L26.9,30.9 Z"/></g><text transform="translate(2.55 24.5) scale(.84 1)" font-size="12.2" font-weight="700" fill="#0f1689" stroke="#0f1689" stroke-width=".4" letter-spacing="2.15">HELM</text></svg>
<div class="t" style="left:2082.60px;top:1252px;font-size:28.7px;line-height:32px;font-weight:400;color:#1c1c1e;letter-spacing:-0.187px;">Helm</div>
<svg class="a" style="left:2378.00px;top:1249.00px;overflow:visible" width="40" height="40" viewBox="0 0 40 40"><g fill="none" stroke="#0f1689" stroke-width="2.6" stroke-linecap="round"><path d="M9.8,12.4 A13.4,13.4 0 0 1 30.7,12.4"/><path d="M9.8,28.8 A13.4,13.4 0 0 0 30.7,28.8"/></g><g fill="#0f1689" stroke="#0f1689" stroke-width=".5" stroke-linejoin="round"><path d="M18.75,7.6 L19.5,1 Q20.25,-0.1 21,1 L21.75,7.6 Z"/><path d="M18.75,33.6 L19.5,39.6 Q20.25,40.7 21,39.6 L21.75,33.6 Z"/><path d="M10.9,12.3 L7.4,4.8 Q7.6,3.5 9,3.9 L13.6,10.3 Z"/><path d="M29.6,12.3 L33.1,4.8 Q32.9,3.5 31.5,3.9 L26.9,10.3 Z"/><path d="M10.9,28.9 L7.4,35.6 Q7.6,36.9 9,36.5 L13.6,30.9 Z"/><path d="M29.6,28.9 L33.1,35.6 Q32.9,36.9 31.5,36.5 L26.9,30.9 Z"/></g><text transform="translate(2.55 24.5) scale(.84 1)" font-size="12.2" font-weight="700" fill="#0f1689" stroke="#0f1689" stroke-width=".4" letter-spacing="2.15">HELM</text></svg>
<div class="t" style="left:2434.50px;top:1252px;font-size:28.7px;line-height:32px;font-weight:400;color:#1c1c1e;letter-spacing:0.080px;">Helm</div>
<svg class="a" style="left:2730.80px;top:1249.00px;overflow:visible" width="40" height="40" viewBox="0 0 40 40"><g fill="none" stroke="#0f1689" stroke-width="2.6" stroke-linecap="round"><path d="M9.8,12.4 A13.4,13.4 0 0 1 30.7,12.4"/><path d="M9.8,28.8 A13.4,13.4 0 0 0 30.7,28.8"/></g><g fill="#0f1689" stroke="#0f1689" stroke-width=".5" stroke-linejoin="round"><path d="M18.75,7.6 L19.5,1 Q20.25,-0.1 21,1 L21.75,7.6 Z"/><path d="M18.75,33.6 L19.5,39.6 Q20.25,40.7 21,39.6 L21.75,33.6 Z"/><path d="M10.9,12.3 L7.4,4.8 Q7.6,3.5 9,3.9 L13.6,10.3 Z"/><path d="M29.6,12.3 L33.1,4.8 Q32.9,3.5 31.5,3.9 L26.9,10.3 Z"/><path d="M10.9,28.9 L7.4,35.6 Q7.6,36.9 9,36.5 L13.6,30.9 Z"/><path d="M29.6,28.9 L33.1,35.6 Q32.9,36.9 31.5,36.5 L26.9,30.9 Z"/></g><text transform="translate(2.55 24.5) scale(.84 1)" font-size="12.2" font-weight="700" fill="#0f1689" stroke="#0f1689" stroke-width=".4" letter-spacing="2.15">HELM</text></svg>
<div class="t" style="left:2786.70px;top:1252px;font-size:28.7px;line-height:32px;font-weight:400;color:#1c1c1e;letter-spacing:0.080px;">Helm</div>
<div class="t" style="left:3083.30px;top:1252px;font-size:28.7px;line-height:32px;font-weight:400;color:#1c1c1e;letter-spacing:-0.057px;">stable</div>
<svg class="a" style="left:583.00px;top:1321.00px;overflow:visible" width="60" height="60" viewBox="0 0 60 60"><path d="M0,0.25 L16.5,9.8 V28.4 L0,18.95 Z" fill="#5c4ee5"/><path d="M18.2,10.8 L34.8,20.4 V38.9 L18.2,29.5 Z" fill="#5c4ee5"/><path d="M36.5,20.4 L52.8,11.1 V29.8 L36.5,38.9 Z" fill="#4040b2"/><path d="M18.2,31.6 L34.8,41 V60 L18.2,50.6 Z" fill="#5c4ee5"/></svg>
<div class="t" style="left:738.70px;top:1334px;font-size:28.7px;line-height:32px;font-weight:400;color:#1c1c1e;letter-spacing:0.012px;">Terraform Module</div>
<div class="t" style="left:1324.00px;top:1334px;font-size:28.7px;line-height:32px;font-weight:400;color:#1c1c1e;letter-spacing:-0.542px;">library</div>
<div class="t" style="left:1675.70px;top:1334px;font-size:28.7px;line-height:32px;font-weight:400;color:#1c1c1e;letter-spacing:-0.344px;">iac</div>
<svg class="a" style="left:2026.00px;top:1331.00px;overflow:visible" width="40" height="40" viewBox="0 0 40 40"><circle cx="20" cy="20" r="20" fill="#5c4ee5"/><g transform="translate(10.9,10) scale(0.345)"><path d="M0,0.25 L16.5,9.8 V28.4 L0,18.95 Z" fill="#fff"/><path d="M18.2,10.8 L34.8,20.4 V38.9 L18.2,29.5 Z" fill="#fff" opacity=".8"/><path d="M36.5,20.4 L52.8,11.1 V29.8 L36.5,38.9 Z" fill="#fff" opacity=".92"/><path d="M18.2,31.6 L34.8,41 V60 L18.2,50.6 Z" fill="#fff"/></g></svg>
<div class="t" style="left:2082.60px;top:1334px;font-size:28.7px;line-height:32px;font-weight:400;color:#1c1c1e;letter-spacing:-2.019px;">HCL</div>
<svg class="a" style="left:2378.00px;top:1331.00px;overflow:visible" width="40" height="40" viewBox="0 0 40 40"><circle cx="20" cy="20" r="20" fill="#5c4ee5"/><g transform="translate(10.9,10) scale(0.345)"><path d="M0,0.25 L16.5,9.8 V28.4 L0,18.95 Z" fill="#fff"/><path d="M18.2,10.8 L34.8,20.4 V38.9 L18.2,29.5 Z" fill="#fff" opacity=".8"/><path d="M36.5,20.4 L52.8,11.1 V29.8 L36.5,38.9 Z" fill="#fff" opacity=".92"/><path d="M18.2,31.6 L34.8,41 V60 L18.2,50.6 Z" fill="#fff"/></g></svg>
<div class="t" style="left:2434.50px;top:1334px;font-size:28.7px;line-height:32px;font-weight:400;color:#1c1c1e;letter-spacing:0.220px;">Terraform</div>
<svg class="a" style="left:2730.80px;top:1331.00px;overflow:visible" width="40" height="40" viewBox="0 0 40 40"><circle cx="20" cy="20" r="20" fill="#5c4ee5"/><g transform="translate(10.9,10) scale(0.345)"><path d="M0,0.25 L16.5,9.8 V28.4 L0,18.95 Z" fill="#fff"/><path d="M18.2,10.8 L34.8,20.4 V38.9 L18.2,29.5 Z" fill="#fff" opacity=".8"/><path d="M36.5,20.4 L52.8,11.1 V29.8 L36.5,38.9 Z" fill="#fff" opacity=".92"/><path d="M18.2,31.6 L34.8,41 V60 L18.2,50.6 Z" fill="#fff"/></g></svg>
<div class="t" style="left:2786.70px;top:1334px;font-size:28.7px;line-height:32px;font-weight:400;color:#1c1c1e;letter-spacing:0.157px;">Terraform</div>
<div class="t" style="left:3083.30px;top:1334px;font-size:28.7px;line-height:32px;font-weight:400;color:#1c1c1e;letter-spacing:-0.057px;">stable</div>
<div class="a" style="left:726.4px;top:1151.2px;width:429.3px;height:71.7px;box-sizing:border-box;border:6px solid #fb8129"></div>
<div class="t" style="left:2828.65px;top:1428px;font-size:28.7px;line-height:32px;font-weight:400;color:#1c1c1e;letter-spacing:-0.689px;">Rows per page:</div>
<div class="t" style="left:3053.55px;top:1427px;font-size:28.7px;line-height:32px;font-weight:400;color:#1c1c1e;letter-spacing:-1.952px;">50</div>
<svg class="a" style="left:3084.60px;top:1421.40px;" width="48" height="48" viewBox="0 0 24 24"><path fill="#6f7074" fill-rule="evenodd" d="M7 10l5 5 5-5z"/></svg>
<div class="t" style="left:3195.61px;top:1428px;font-size:28.7px;line-height:32px;font-weight:400;color:#1c1c1e;letter-spacing:0.221px;">1–8 of 8</div>
<svg class="a" style="left:3357.00px;top:1420.60px;" width="48" height="48" viewBox="0 0 24 24"><path fill="#b9babf" fill-rule="evenodd" d="M15.41 7.41L14 6l-6 6 6 6 1.41-1.41L10.83 12z"/></svg>
<svg class="a" style="left:3436.80px;top:1420.60px;" width="48" height="48" viewBox="0 0 24 24"><path fill="#b9babf" fill-rule="evenodd" d="M8.59 16.59L13.17 12 8.59 7.41 10 6l6 6-6 6-1.41-1.41z"/></svg>
<div class="a" style="left:3373px;top:1580.5px;width:112px;height:112px;border-radius:50%;background:#0094ff;box-shadow:0 6px 10px -2px rgba(0,0,0,.2),0 12px 20px rgba(0,0,0,.14),0 2px 36px rgba(0,0,0,.12)"></div>
<svg class="a" style="left:3405.00px;top:1612.80px;" width="48" height="48" viewBox="0 0 24 24"><path fill="#fff" fill-rule="evenodd" d="M4 4h16v12H5.17L4 17.17V4m0-2c-1.1 0-1.99.9-1.99 2L2 22l4-4h14c1.1 0 2-.9 2-2V4c0-1.1-.9-2-2-2H4zm2 10h8v2H6v-2zm0-3h12v2H6V9zm0-3h12v2H6V6z"/></svg>
<svg class="a" style="left:1.00px;top:1769.00px;z-index:21" width="3" height="12" viewBox="0 0 3 12"><path d="M0,12 L0,0 Q0.5,9 2.7,12 Z" fill="#000"/></svg>
<div class="a" style="left:0;top:0;width:3584px;height:1782px;box-sizing:border-box;border:1px solid #d8d8d8;z-index:20"></div>
</div></div></body></html>
